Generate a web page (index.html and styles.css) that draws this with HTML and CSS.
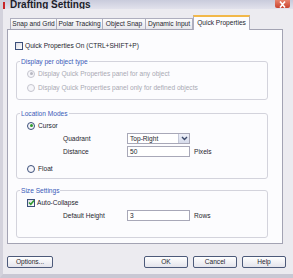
FILE: index.html
```html
<!DOCTYPE html>
<html lang="en">
<head>
  <meta charset="UTF-8">
  <title>Drafting Settings</title>
  <link rel="stylesheet" href="styles.css">
</head>
<body>
<div class="window">
  <div class="titlebar">
    <span class="app-icon"></span>
    <span class="title">Drafting Settings</span>
    <span class="close">
      <svg width="9" height="7" viewBox="0 0 9 7"><path d="M2 0.5 L7 6.5 M7 0.5 L2 6.5" stroke="#fff" stroke-width="1.6" fill="none"/></svg>
    </span>
  </div>

  <div class="tabs">
    <div class="tab w1">Snap and Grid</div>
    <div class="tab w2">Polar Tracking</div>
    <div class="tab w3">Object Snap</div>
    <div class="tab w4">Dynamic Input</div>
    <div class="tab active">Quick Properties</div>
  </div>

  <div class="panel">
    <div class="row check-top"><span class="box"></span>Quick Properties On (CTRL+SHIFT+P)</div>

    <div class="group g1">
      <span class="legend">Display per object type</span>
      <div class="row opt disabled"><span class="radio on"></span>Display Quick Properties panel for any object</div>
      <div class="row opt disabled"><span class="radio"></span>Display Quick Properties panel only for defined objects</div>
    </div>

    <div class="group g2">
      <span class="legend">Location Modes</span>
      <div class="row opt"><span class="radio on"></span>Cursor</div>
      <div class="row field">
        <span class="field-label">Quadrant</span>
        <span class="select">Top-Right<span class="drop"><svg width="7" height="5" viewBox="0 0 7 5"><path d="M1 1 L3.5 3.5 L6 1" stroke="#3c4a6a" stroke-width="1.4" fill="none"/></svg></span></span>
      </div>
      <div class="row field">
        <span class="field-label">Distance</span>
        <span class="input">50</span>
        <span class="unit">Pixels</span>
      </div>
      <div class="row opt float"><span class="radio"></span>Float</div>
    </div>

    <div class="group g3">
      <span class="legend">Size Settings</span>
      <div class="row opt"><span class="box checked"><svg width="7" height="7" viewBox="0 0 7 7"><path d="M1 3.5 L2.8 5.3 L6 1.5" stroke="#2f9a2f" stroke-width="1.5" fill="none"/></svg></span>Auto-Collapse</div>
      <div class="row field">
        <span class="field-label">Default Height</span>
        <span class="input">3</span>
        <span class="unit">Rows</span>
      </div>
    </div>
  </div>

  <div class="buttons">
    <div class="btn options">Options...</div>
    <div class="spacer"></div>
    <div class="btn">OK</div>
    <div class="btn">Cancel</div>
    <div class="btn">Help</div>
  </div>
</div>
</body>
</html>
```

FILE: styles.css
```css
body {
  margin: 0;
  font-family: "Liberation Sans", Arial, sans-serif;
  font-size: 6.6px;
  color: #26262e;
}
.window {
  width: 293px;
  height: 278px;
  box-sizing: border-box;
  background-color: #ecebf0;
  border-left: 3px solid #d3d2dc;
  border-bottom: 4px solid #c9c8d4;
  overflow: hidden;
}

/* title bar, cut off at the top */
.titlebar {
  height: 9px;
  display: flex;
  align-items: flex-end;
  background: linear-gradient(#c9cbdc, #e2e2ec);
  margin-left: -3px;
  overflow: hidden;
}
.app-icon {
  width: 5px;
  height: 7px;
  background-color: #c8262a;
  margin-right: 5px;
}
.title {
  font-weight: bold;
  font-size: 10px;
  line-height: 10px;
  margin-bottom: -1px;
  color: #1d1d2a;
  white-space: nowrap;
}
.close {
  margin-left: auto;
  margin-right: 3px;
  width: 15px;
  height: 8px;
  background: linear-gradient(#e8826c, #c9432f);
  border-radius: 0 0 2px 2px;
  display: flex;
  align-items: center;
  justify-content: center;
  align-self: flex-start;
}

/* tabs */
.tabs {
  display: flex;
  align-items: flex-end;
  height: 20px;
  padding-left: 7px;
  position: relative;
  z-index: 1;
}
.tab {
  height: 11px;
  box-sizing: border-box;
  line-height: 10px;
  border: 1px solid #aeaebe;
  border-bottom: none;
  border-left: none;
  background: linear-gradient(#fbfbfc, #e7e7ec);
  text-align: center;
  white-space: nowrap;
}
.tab.w1 { width: 47px; border-left: 1px solid #aeaebe; }
.tab.w2 { width: 46px; }
.tab.w3 { width: 43px; }
.tab.w4 { width: 47px; }
.tab.active {
  width: 57px;
  height: 15px;
  margin-bottom: -1px;
  line-height: 12px;
  background: #fcfcfe;
  border-top: 2px solid #f2b84a;
  border-left: 1px solid #aeaebe;
}

/* main panel */
.panel {
  width: 276px;
  height: 215px;
  box-sizing: border-box;
  margin-left: 4px;
  background-color: #fcfcfe;
  border: 1px solid #a3a3b3;
  padding: 9px 14px 5px 8px;
}
.row {
  height: 13px;
  display: flex;
  align-items: center;
  white-space: nowrap;
}
.check-top {
  margin-left: -1px;
}
.box {
  width: 6px;
  height: 6px;
  border: 1px solid #3b4f7a;
  background: linear-gradient(135deg, #dcdce4, #ffffff);
  margin-right: 2px;
  display: flex;
  align-items: center;
  justify-content: center;
}
.box svg {
  flex: none;
}
.radio {
  width: 6px;
  height: 6px;
  border: 1px solid #3b4f7a;
  border-radius: 50%;
  background: #f6f6fa;
  margin-right: 3px;
  position: relative;
}
.radio.on::after {
  content: "";
  position: absolute;
  left: 1.5px;
  top: 1.5px;
  width: 3px;
  height: 3px;
  border-radius: 50%;
  background: #2f9a2f;
}
.disabled {
  color: #a9a9b3;
}
.disabled .radio {
  border-color: #c5c5ce;
}
.disabled .radio.on::after {
  background: #b8b8c2;
}

/* group boxes */
.group {
  box-sizing: border-box;
  border: 1px solid #d3d3dc;
  border-radius: 3px;
  padding-left: 10px;
}
.legend {
  display: block;
  width: max-content;
  height: 9px;
  line-height: 9px;
  margin: -5px 0 0 -7px;
  padding: 0 1px;
  background: #fcfcfe;
  color: #3a5bb8;
}
.g1 {
  margin-top: 9px;
  height: 39px;
}
.g2 {
  margin-top: 13px;
  height: 66px;
}
.g3 {
  margin-top: 11px;
  height: 48px;
}
.opt {
  margin-top: 1px;
}
.float {
  margin-top: 4px;
}
.field {
  padding-left: 36px;
}
.field-label {
  width: 64px;
}
.select {
  width: 63px;
  height: 11px;
  box-sizing: border-box;
  border: 1px solid #a8a8b8;
  background: #fff;
  display: flex;
  align-items: center;
  padding-left: 2px;
}
.drop {
  margin-left: auto;
  width: 10px;
  height: 9px;
  border-left: 1px solid #c4c8d8;
  background: linear-gradient(#eef0f8, #d6dbeb);
  display: flex;
  align-items: center;
  justify-content: center;
}
.input {
  width: 63px;
  height: 11px;
  box-sizing: border-box;
  border: 1px solid #a8a8b8;
  background: #fff;
  line-height: 9px;
  padding-left: 2px;
}
.unit {
  margin-left: 4px;
}

/* bottom buttons */
.buttons {
  display: flex;
  margin-top: 12px;
  padding-left: 4px;
  padding-right: 7px;
  gap: 5px;
}
.spacer {
  flex: 1;
}
.btn {
  width: 44px;
  height: 12px;
  box-sizing: border-box;
  border: 1px solid #4d5a7a;
  border-radius: 2px;
  background: linear-gradient(#ffffff, #e4e4ec);
  text-align: center;
  line-height: 10px;
}
.btn.options {
  width: 46px;
}
```
